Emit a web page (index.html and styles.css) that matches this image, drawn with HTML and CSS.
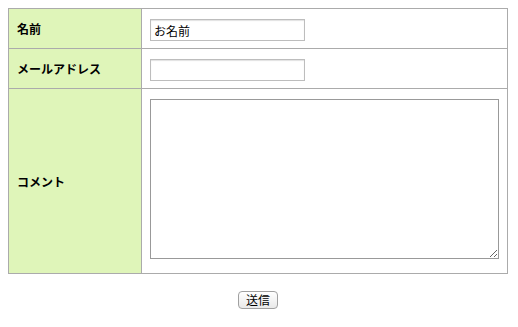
FILE: index.html
```html
<!DOCTYPE html>
<html>
<head>
    <meta charset="utf-8">
    <title>お問い合わせ</title>
    <link rel="stylesheet" href="styles.css">
</head>
<body>
    <form class="contact-form" onsubmit="return false;">
        <table class="form-table">
            <tr>
                <th>名前</th>
                <td><input type="text" class="text-field" value="お名前"></td>
            </tr>
            <tr>
                <th>メールアドレス</th>
                <td><input type="text" class="text-field"></td>
            </tr>
            <tr>
                <th>コメント</th>
                <td class="comment-cell"><textarea class="comment-box"></textarea></td>
            </tr>
        </table>
        <div class="actions">
            <button type="submit" class="btn-submit">送信</button>
        </div>
    </form>
</body>
</html>
```

FILE: styles.css
```css
body {
    margin: 8px;
    font-family: "Noto Sans CJK JP", "Noto Sans", sans-serif;
    font-size: 12px;
    color: #000;
    background: #fff;
}

.contact-form {
    width: 500px;
}

.form-table {
    width: 500px;
    border-collapse: collapse;
    table-layout: fixed;
}

.form-table th,
.form-table td {
    border: 1px solid #ababab;
    vertical-align: middle;
}

.form-table th {
    width: 116px;
    padding: 0 8px;
    background-color: #dff5b9;
    text-align: left;
    font-weight: bold;
    font-size: 12px;
}

.form-table td {
    padding: 10px 8px 7px;
}

.text-field {
    display: block;
    box-sizing: border-box;
    width: 155px;
    height: 22px;
    margin: 0;
    padding: 1px 3px 0;
    border: 1px solid #bdbdbd;
    box-shadow: inset 0 1px 1px rgba(0, 0, 0, 0.12);
    font-family: inherit;
    font-size: 12px;
    color: #000;
    outline: none;
}

.form-table td.comment-cell {
    padding: 10px 8px 14px;
}

.comment-box {
    display: block;
    box-sizing: border-box;
    width: 349px;
    height: 160px;
    margin: 0;
    border: 1px solid #999;
    font-family: inherit;
    font-size: 12px;
    outline: none;
}

.actions {
    text-align: center;
    margin-top: 17px;
}

.btn-submit {
    height: 18px;
    padding: 0 7px;
    border: 1px solid #a0a0a0;
    border-radius: 4px;
    background: linear-gradient(#ffffff, #e9e9e9);
    font-family: inherit;
    font-size: 12px;
    line-height: 14px;
    color: #000;
    cursor: pointer;
}
```
